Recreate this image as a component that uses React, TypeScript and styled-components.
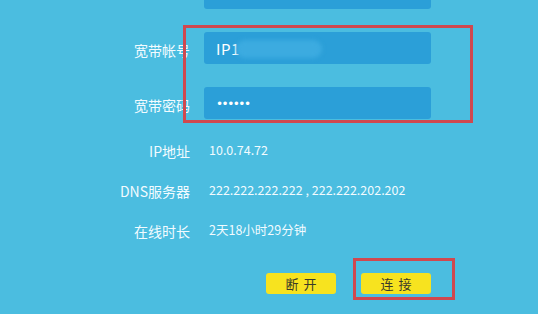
import styled, { createGlobalStyle } from 'styled-components'

const GlobalStyle = createGlobalStyle`
  html, body {
    margin: 0;
    padding: 0;
    overflow: hidden;
    background: #4bbde0;
  }
  body {
    font-family: "Noto Sans CJK SC", "Microsoft YaHei", "DejaVu Sans", sans-serif;
  }
`

const Page = styled.div`
  position: relative;
  width: 538px;
  height: 314px;
  background: #4bbde0;
  overflow: hidden;
`

const Form = styled.div`
  display: flex;
  flex-direction: column;
  margin-top: -23px;
`

const FieldGroup = styled.div`
  display: flex;
  flex-direction: column;
  gap: 23px;
`

const InfoGroup = styled.div`
  display: flex;
  flex-direction: column;
  margin-top: 10px;
`

const FieldRow = styled.div`
  display: grid;
  grid-template-columns: 190px 227px;
  column-gap: 14px;
  align-items: center;
  height: 32px;
`

const InfoRow = styled.div`
  display: grid;
  grid-template-columns: 190px auto;
  column-gap: 19px;
  align-items: center;
  height: 40px;
`

const Label = styled.div`
  text-align: right;
  font-size: 14px;
  color: #f2fbff;
  white-space: nowrap;
  padding-top: 3px;
`

const Field = styled.div`
  position: relative;
  display: flex;
  align-items: center;
  height: 32px;
  padding: 0 12px;
  box-sizing: border-box;
  background: #2b9fd8;
  border-radius: 3px;
  color: #ffffff;
  font-size: 15px;
  letter-spacing: 0.5px;
`

const Mask = styled.span`
  position: absolute;
  left: 32px;
  top: 8px;
  width: 86px;
  height: 18px;
  border-radius: 9px;
  background: #3cabe0;
  filter: blur(2px);
`

const Dots = styled.span`
  font-family: "DejaVu Sans", sans-serif;
  font-size: 12px;
  letter-spacing: -1.5px;
  padding-top: 2px;
`

const Value = styled.div`
  font-size: 12.5px;
  color: #f2fbff;
  white-space: pre;
`

const ButtonRow = styled.div`
  display: flex;
  gap: 25px;
  padding-left: 266px;
  margin-top: 24px;
`

const Button = styled.button`
  width: 70px;
  height: 21px;
  border: none;
  border-radius: 3px;
  background: #f7e31f;
  color: #3a3a2a;
  font-family: inherit;
  font-size: 13px;
  letter-spacing: 5px;
  text-indent: 5px;
  padding: 0;
  line-height: 21px;
`

const Highlight = styled.div<{ $x: number; $y: number; $w: number; $h: number }>`
  position: absolute;
  left: ${({ $x }) => $x}px;
  top: ${({ $y }) => $y}px;
  width: ${({ $w }) => $w}px;
  height: ${({ $h }) => $h}px;
  border: 3px solid #d0484f;
  box-sizing: border-box;
  pointer-events: none;
`

const infoRows = [
  { label: 'IP地址', value: '10.0.74.72' },
  { label: 'DNS服务器', value: '222.222.222.222 , 222.222.202.202' },
  { label: '在线时长', value: '2天18小时29分钟' },
]

export default function App() {
  return (
    <Page>
      <GlobalStyle />
      <Form>
        <FieldGroup>
          <FieldRow>
            <Label />
            <Field />
          </FieldRow>
          <FieldRow>
            <Label>宽带帐号</Label>
            <Field>
              IP1
              <Mask />
            </Field>
          </FieldRow>
          <FieldRow>
            <Label>宽带密码</Label>
            <Field>
              <Dots>••••••</Dots>
            </Field>
          </FieldRow>
        </FieldGroup>
        <InfoGroup>
          {infoRows.map((r) => (
            <InfoRow key={r.label}>
              <Label>{r.label}</Label>
              <Value>{r.value}</Value>
            </InfoRow>
          ))}
        </InfoGroup>
        <ButtonRow>
          <Button>断开</Button>
          <Button>连接</Button>
        </ButtonRow>
      </Form>
      <Highlight $x={183} $y={25} $w={290} $h={98} />
      <Highlight $x={353} $y={258} $w={102} $h={42} />
    </Page>
  )
}
